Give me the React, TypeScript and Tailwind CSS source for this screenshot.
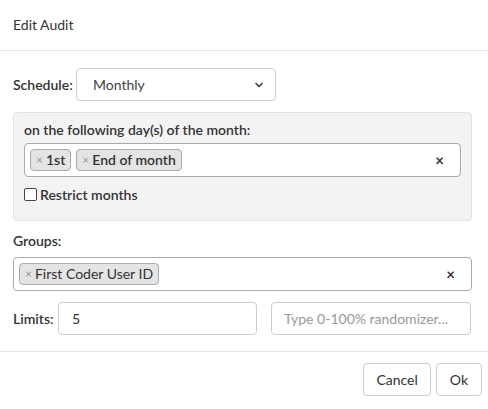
import { ChevronDown } from 'lucide-react';

const font = { fontFamily: 'Lato, "Open Sans", sans-serif' };

function Chip({ label, bold }: { label: string; bold?: boolean }) {
  return (
    <span className="inline-flex items-center h-[22px] px-[5px] bg-[#e4e4e4] border border-[#aaa] rounded-[4px] text-[14px] text-[#333] leading-none">
      <span className="text-[#999] text-[12px] mr-[3px]">×</span>
      <span className={bold ? 'font-semibold' : ''}>{label}</span>
    </span>
  );
}

function ClearX() {
  return <span className="text-[#333] text-[15px] font-bold leading-none">×</span>;
}

export default function App() {
  return (
    <div className="w-[488px] h-[409px] bg-white text-[#333] text-[14px] flex flex-col" style={font}>
      <div className="h-[51px] border-b border-[#e5e5e5] px-[13px] flex items-center pb-[1px]">
        <span>Edit Audit</span>
      </div>

      <div className="flex-1 px-[13px] pt-[17px] border-b border-[#e5e5e5]">
        <div className="flex items-center">
          <span className="font-semibold w-[63px]">Schedule:</span>
          <div className="w-[200px] h-[33px] border border-[#ccc] rounded-[4px] flex items-center justify-between pl-[16px] pr-[10px]">
            <span className="text-[#444]">Monthly</span>
            <ChevronDown className="w-[12px] h-[12px] text-[#444]" strokeWidth={3.5} />
          </div>
        </div>

        <div className="mt-[11px] w-[459px] h-[109px] bg-[#f3f3f3] border border-[#e3e3e3] rounded-[4px] px-[10px] pt-[9px]">
          <div className="font-semibold leading-[16px]">on the following day(s) of the month:</div>
          <div className="mt-[5px] h-[34px] border border-[#aaa] rounded-[4px] bg-white flex items-center pl-[5px] pr-[16px] gap-[5px]">
            <Chip label="1st" bold />
            <Chip label="End of month" bold />
            <div className="flex-1" />
            <ClearX />
          </div>
          <label className="mt-[7px] flex items-center font-semibold">
            <span className="w-[13px] h-[13px] border border-[#444] rounded-[2px] bg-white mr-[3px]" />
            Restrict months
          </label>
        </div>

        <div className="mt-[12px] font-semibold leading-[16px]">Groups:</div>
        <div className="mt-[8px] w-[459px] h-[34px] border border-[#aaa] rounded-[4px] bg-white flex items-center pl-[5px] pr-[16px]">
          <Chip label="First Coder User ID" />
          <div className="flex-1" />
          <ClearX />
        </div>

        <div className="mt-[11px] flex items-center">
          <span className="font-semibold w-[45px]">Limits:</span>
          <div className="w-[199px] h-[33px] border border-[#ccc] rounded-[4px] flex items-center px-[13px]">5</div>
          <div className="ml-[14px] w-[200px] h-[33px] border border-[#ccc] rounded-[4px] flex items-center px-[12px] text-[#999]">
            Type 0-100% randomizer...
          </div>
        </div>
      </div>

      <div className="h-[57px] flex items-center justify-end gap-[5px] pr-[6px] pb-[2px]">
        <button className="h-[33px] px-[12px] border border-[#ccc] rounded-[4px] bg-white text-[#333]">Cancel</button>
        <button className="h-[33px] px-[13px] border border-[#ccc] rounded-[4px] bg-white text-[#333]">Ok</button>
      </div>
    </div>
  );
}
